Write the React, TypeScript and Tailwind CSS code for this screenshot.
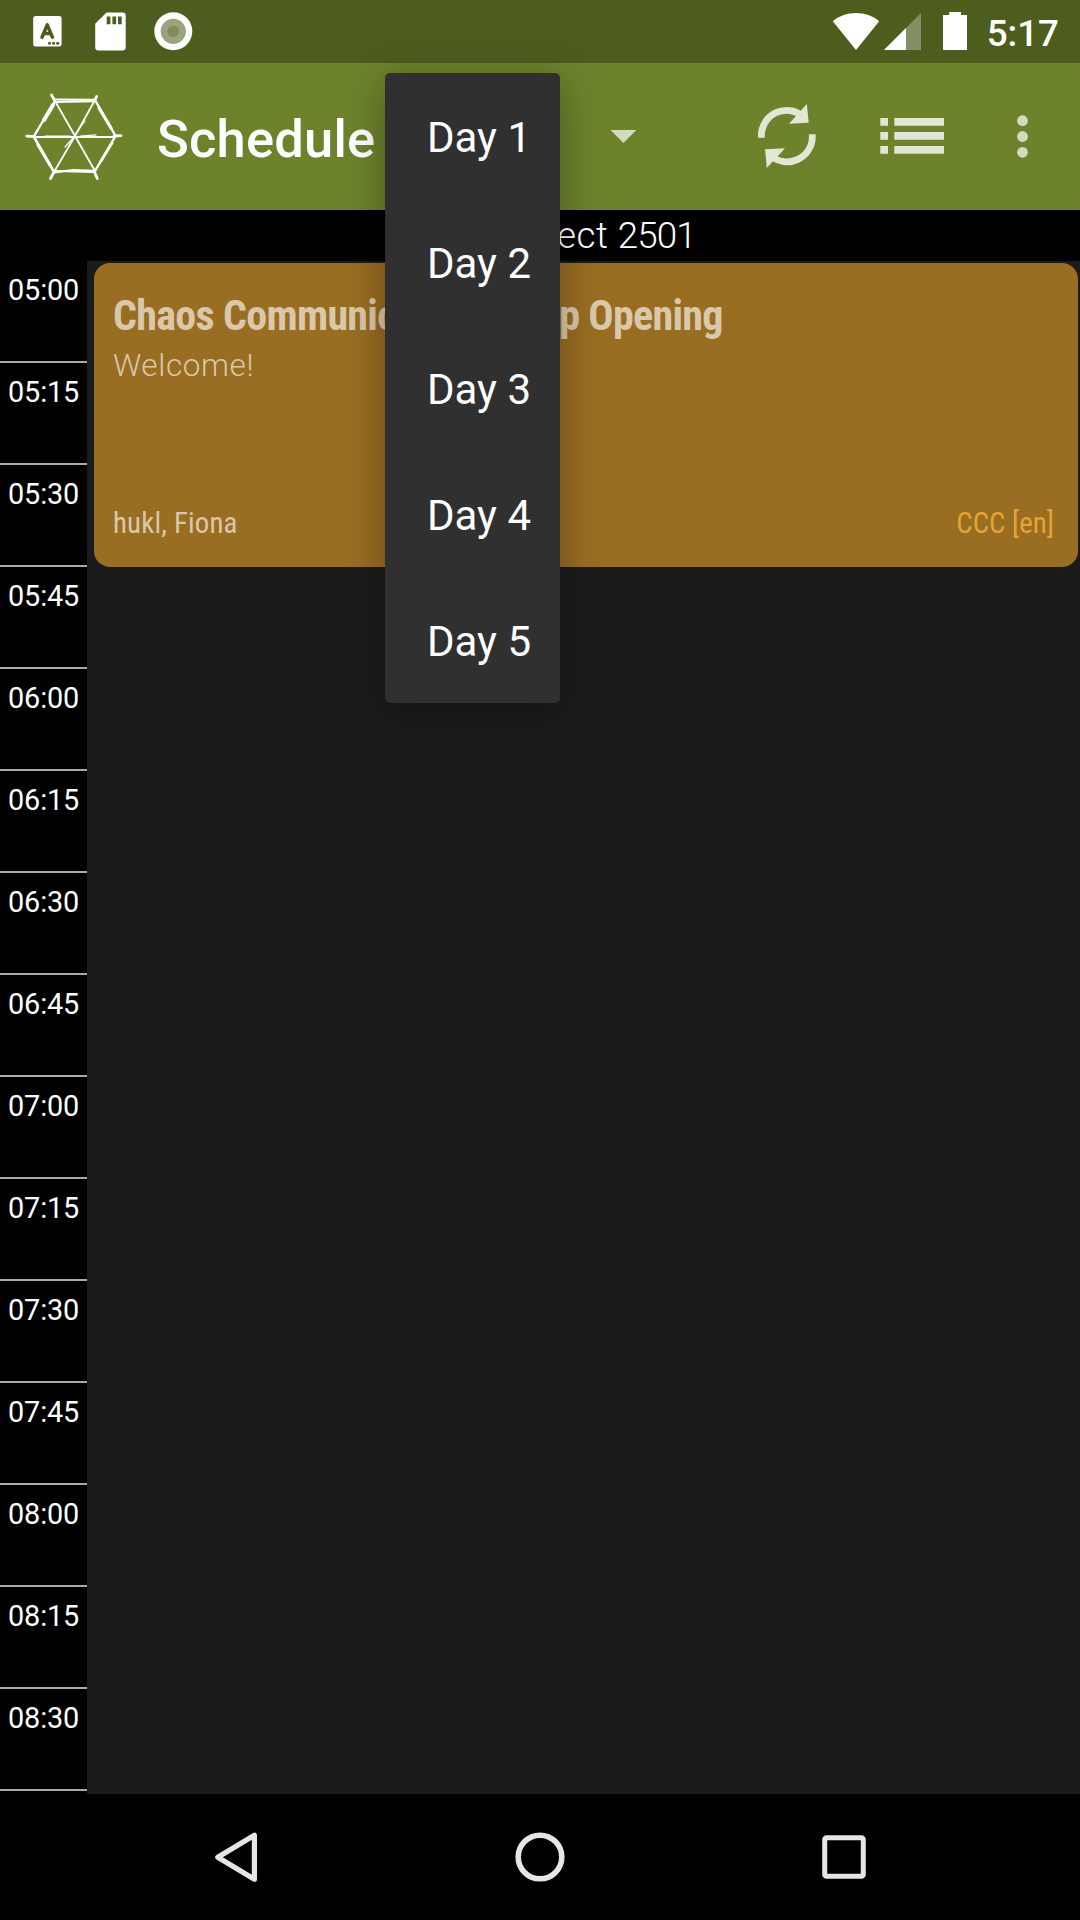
import React from "react";

const TIMES = [
  "05:00", "05:15", "05:30", "05:45", "06:00", "06:15", "06:30", "06:45",
  "07:00", "07:15", "07:30", "07:45", "08:00", "08:15", "08:30",
];

const DAYS = ["Day 1", "Day 2", "Day 3", "Day 4", "Day 5"];

function StatusBar() {
  return (
    <div className="flex h-[63px] shrink-0 items-center justify-between bg-[#4d5d1e] pr-[21px] pl-[33px]">
      <div className="flex items-center">
        <svg className="h-[63px] w-[29px]" viewBox="33 0 29 63">
          <rect x="33.2" y="16" width="28.4" height="30.6" rx="2.5" fill="#fff" />
          <path d="M42 37.2L47.3 24.8L52.4 37.2M44 33.4H50.6" fill="none" stroke="#4d5d1e" strokeWidth="3.5" strokeLinecap="round" strokeLinejoin="round" />
          <circle cx="49.5" cy="43.2" r="1.5" fill="#4d5d1e" />
          <circle cx="53.6" cy="43.2" r="1.5" fill="#4d5d1e" />
          <circle cx="57.7" cy="43.2" r="1.5" fill="#4d5d1e" />
        </svg>
        <svg className="ml-[33px] h-[63px] w-[31px]" viewBox="95 0 31 63">
          <path d="M106.5 12.5H122.5Q125.7 12.5 125.7 15.7V47.2Q125.7 50.5 122.5 50.5H98.4Q95.2 50.5 95.2 47.2V23.8Z" fill="#fff" />
          <path d="M106.7 16.5h3.7v7.7h-3.7zM112.4 16.5h3.7v7.7h-3.7zM118 16.5h3.7v7.7h-3.7z" fill="#4d5d1e" />
        </svg>
        <svg className="ml-[28px] h-[63px] w-[39px]" viewBox="154 0 39 63">
          <circle cx="173.3" cy="31.3" r="19" fill="#fff" />
          <circle cx="173.3" cy="31.3" r="12.6" fill="#99a37e" />
          <circle cx="173.3" cy="31.3" r="5.7" fill="#7f8b5b" />
        </svg>
      </div>
      <div className="flex items-center">
        <svg className="h-[63px] w-[89px]" viewBox="833 0 89 63">
          <path d="M856 50L832.8 21.2Q842.5 13 856 13T879.2 21.2Z" fill="#fff" />
          <path d="M884 50L921 13V50Z" fill="#839065" />
          <path d="M884 50L906 28V50Z" fill="#fff" />
        </svg>
        <svg className="ml-[21px] h-[63px] w-[24px]" viewBox="943 0 24 63">
          <path d="M943 15H949.2V12H961V15H967V50H943Z" fill="#fff" />
        </svg>
        <span className="ml-[20px] pt-[4px] text-[36.75px] leading-[40px] font-medium text-white">5:17</span>
      </div>
    </div>
  );
}

function WebLogo() {
  return (
    <svg className="h-[147px] w-[98px]" viewBox="25 63 98 147" fill="none" stroke="#fff" strokeLinecap="round">
      <path d="M55 101L34 136" strokeWidth="2.4" />
      <path d="M53 105L44 120" strokeWidth="4" />
      <path d="M34 137L54 172" strokeWidth="2.6" />
      <path d="M38 145L50 165" strokeWidth="3" />
      <path d="M95 100L115 135" strokeWidth="2.4" />
      <path d="M99 108L111 128" strokeWidth="3.2" />
      <path d="M115 137L95 171" strokeWidth="2.4" />
      <path d="M112 143L101 161" strokeWidth="2.8" />
      <path d="M55 99.6L94 99.8M57 102L93 101.3" strokeWidth="2" />
      <path d="M54 172.3L74 170L94 170.8M56 171L94 171.8" strokeWidth="2.2" />
      <path d="M55 101L75 136L95 171M95 100L75 136L54 172M34 137H115" strokeWidth="1.8" />
      <path d="M45 136H70M80 136.2L96 134.8M76 133L85 121M73 138L65 147" strokeWidth="1.2" />
      <path d="M55 101L51.5 95M94.5 101L96.6 96.5M114 136L121 135.6M35 136.6L26.8 136.2M94 171L97.3 178.5M54 172L50.5 178.5" strokeWidth="2.8" />
    </svg>
  );
}

function AppBar() {
  return (
    <div className="flex h-[147px] shrink-0 items-center bg-[#6c832c] pl-[25px]">
      <WebLogo />
      <h1 className="ml-[34px] pt-[4px] text-[52.5px] leading-[60px] font-medium tracking-[0.2px] text-white">Schedule</h1>
      <svg className="ml-auto h-[147px] w-[26px]" viewBox="611 63 26 147">
        <path d="M610.6 130H636.4L623.5 143Z" fill="#d3dabf" />
      </svg>
      <svg className="ml-[120px] h-[147px] w-[60px]" viewBox="757 63 60 147">
        <path d="M761.4 137.8V135.6A25.2 25.2 0 0 1 803 116.4" fill="none" stroke="#e2e6d5" strokeWidth="6.8" />
        <path d="M806.8 104L808.7 122.8L789 123.8L796.5 115.5L800.5 111Z" fill="#e2e6d5" />
        <path d="M812.3 134.3V136.4A25.2 25.2 0 0 1 771 156" fill="none" stroke="#e2e6d5" strokeWidth="6.8" />
        <path d="M766.8 168L765 149.2L785 148.2L777.5 156.5L773.2 161Z" fill="#e2e6d5" />
      </svg>
      <svg className="ml-[63px] h-[147px] w-[64px]" viewBox="880 63 64 147" fill="#e2e6d5">
        <path d="M880.3 118h7.7v7.7h-7.7zM880.3 132h7.7v7.7h-7.7zM880.3 146h7.7v7.7h-7.7zM894.3 118H944v7.7h-49.7zM894.3 132H944v7.7h-49.7zM894.3 146H944v7.7h-49.7z" />
      </svg>
      <svg className="mr-[51px] ml-[72px] h-[147px] w-[13px]" viewBox="1016 63 13 147" fill="#d3dabf">
        <circle cx="1022.5" cy="120.7" r="5.4" />
        <circle cx="1022.5" cy="136.5" r="5.4" />
        <circle cx="1022.5" cy="152.3" r="5.4" />
      </svg>
    </div>
  );
}

function Event() {
  return (
    <div className="mt-[2px] mr-[2px] ml-[7px] flex h-[304px] flex-col rounded-[16px] bg-[#996d22] px-[19px] pt-[28px] pb-[24px] text-[#dac8aa]">
      <h2 className="text-[42px] leading-[50px] font-bold tracking-[-0.68px] whitespace-nowrap [font-stretch:75%]">
        Chaos Communication Camp Opening
      </h2>
      <p className="mt-[5px] text-[31.5px] leading-[40px] font-light tracking-[0.6px]">Welcome!</p>
      <div className="mt-auto flex justify-between pr-[5px] text-[28.875px] leading-[40px] [font-stretch:75%]">
        <span className="tracking-[0.18px]">hukl, Fiona</span>
        <span className="text-[#e5a432]">CCC [en]</span>
      </div>
    </div>
  );
}

function DayMenu() {
  return (
    <ul className="absolute top-[73px] left-[385px] w-[175px] rounded-[5px] bg-[#303030] shadow-[0_8px_42px_rgba(0,0,0,0.32)]">
      {DAYS.map((d) => (
        <li key={d} className="flex h-[126px] items-center pt-[3px] pl-[42px] text-[42px] leading-[50px] whitespace-nowrap text-white">
          {d}
        </li>
      ))}
    </ul>
  );
}

function NavBar() {
  return (
    <div className="flex h-[126px] shrink-0 items-center bg-black pl-[214px]">
      <svg className="h-[126px] w-[46px]" viewBox="214 1794 46 126">
        <path d="M217.8 1857.2L254.4 1835.2V1879.2Z" fill="none" stroke="#e6e6e6" strokeWidth="5.2" strokeLinejoin="round" />
      </svg>
      <svg className="ml-[255px] h-[126px] w-[50px]" viewBox="515 1794 50 126">
        <circle cx="540" cy="1857" r="21.8" fill="none" stroke="#e6e6e6" strokeWidth="5.6" />
      </svg>
      <svg className="ml-[257px] h-[126px] w-[44px]" viewBox="822 1794 44 126">
        <rect x="824.7" y="1837.7" width="38.6" height="38.6" rx="1.8" fill="none" stroke="#e6e6e6" strokeWidth="5" />
      </svg>
    </div>
  );
}

export default function App() {
  return (
    <div className="relative flex h-[1920px] w-[1080px] flex-col overflow-hidden bg-black font-['Roboto',sans-serif]">
      <StatusBar />
      <AppBar />
      <div className="h-[51px] shrink-0 pt-[1px] pl-[107px] text-center text-[36.75px] leading-[50px] font-light tracking-[0.5px] text-white">
        Project <span className="tracking-[-0.9px]">2501</span>
      </div>
      <div className="flex h-[1533px] shrink-0">
        <div className="w-[87px] bg-black">
          {TIMES.map((t) => (
            <div key={t} className="h-[102px] border-b-2 border-[#aaaaaa] pt-[9px] pl-[8px] text-[28.875px] leading-[40px] tracking-[-0.15px] text-white">
              {t}
            </div>
          ))}
        </div>
        <div className="flex-1 bg-[#1b1b1b]">
          <Event />
        </div>
      </div>
      <NavBar />
      <DayMenu />
    </div>
  );
}
